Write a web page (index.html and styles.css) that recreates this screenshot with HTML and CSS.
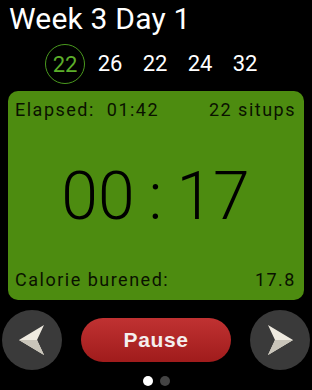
FILE: index.html
```html
<!DOCTYPE html>
<html>
<head>
<meta charset="utf-8">
<link rel="stylesheet" href="styles.css">
</head>
<body>
<div class="screen">
  <h1 class="title">Week 3 Day 1</h1>
  <div class="rounds">
    <span class="round current">22</span>
    <span class="round">26</span>
    <span class="round">22</span>
    <span class="round">24</span>
    <span class="round">32</span>
  </div>
  <div class="card">
    <div class="row">
      <span>Elapsed:&nbsp; 01:42</span>
      <span>22 situps</span>
    </div>
    <div class="timer">00<span class="colon">:</span>17</div>
    <div class="row">
      <span>Calorie burened:</span>
      <span>17.8</span>
    </div>
  </div>
  <div class="controls">
    <button class="nav">
      <svg width="30" height="32" viewBox="0 0 30 32"><path d="M2 16 L27 1 L20 16 L27 31 Z" fill="#eeeae0"/><path d="M2 16 L20 16 L27 31 Z" fill="#c9c5ba"/></svg>
    </button>
    <button class="pause">Pause</button>
    <button class="nav">
      <svg width="30" height="32" viewBox="0 0 30 32"><path d="M28 16 L3 1 L10 16 L3 31 Z" fill="#eeeae0"/><path d="M28 16 L10 16 L3 31 Z" fill="#c9c5ba"/></svg>
    </button>
  </div>
  <div class="dots">
    <span class="dot active"></span>
    <span class="dot"></span>
  </div>
</div>
</body>
</html>
```
FILE: styles.css
```css
html, body {
  margin: 0;
  padding: 0;
  background: #000;
}
.screen {
  width: 312px;
  height: 390px;
  overflow: hidden;
  font-family: Roboto, "Liberation Sans", sans-serif;
  color: #fff;
}
.title {
  margin: 0;
  padding: 2px 0 0 9px;
  font-size: 30px;
  font-weight: 400;
  line-height: 34px;
  letter-spacing: 0.2px;
}
.rounds {
  display: flex;
  align-items: center;
  gap: 5px;
  padding-left: 45px;
  height: 42px;
  margin-top: 7px;
}
.round {
  width: 40px;
  text-align: center;
  font-size: 22px;
  line-height: 40px;
}
.round.current {
  box-sizing: border-box;
  height: 40px;
  border: 1.5px solid #4a9a1e;
  border-radius: 50%;
  color: #5cae2a;
}
.card {
  margin: 6px 8px 0;
  height: 209px;
  background: #4d8c10;
  border-radius: 10px;
  display: flex;
  flex-direction: column;
  justify-content: space-between;
  color: #0a1200;
  padding: 8px 8px 9px 7px;
  box-sizing: border-box;
}
.row {
  display: flex;
  justify-content: space-between;
  font-size: 18px;
  line-height: 22px;
  letter-spacing: 1.5px;
}
.timer {
  text-align: center;
  font-size: 66px;
  font-weight: 300;
  line-height: 70px;
  color: #000;
  margin-top: 4px;
}
.colon {
  margin: 0 14px;
}
.controls {
  display: flex;
  align-items: center;
  justify-content: space-between;
  padding: 0 2px;
  margin-top: 10px;
}
.nav {
  width: 60px;
  height: 60px;
  border-radius: 50%;
  border: none;
  background: #3a3a3a;
  display: flex;
  align-items: center;
  justify-content: center;
  padding: 0;
}
.pause {
  width: 150px;
  height: 44px;
  border: none;
  border-radius: 22px;
  background: linear-gradient(#c03232, #a01c1c);
  color: #f4eeee;
  font-family: "Liberation Sans", Arial, sans-serif;
  font-weight: 700;
  font-size: 21px;
  letter-spacing: 0.6px;
}
.dots {
  display: flex;
  justify-content: center;
  gap: 7px;
  margin-top: 6px;
}
.dot {
  width: 10px;
  height: 10px;
  border-radius: 50%;
  background: #444;
}
.dot.active {
  background: #fff;
}
```
